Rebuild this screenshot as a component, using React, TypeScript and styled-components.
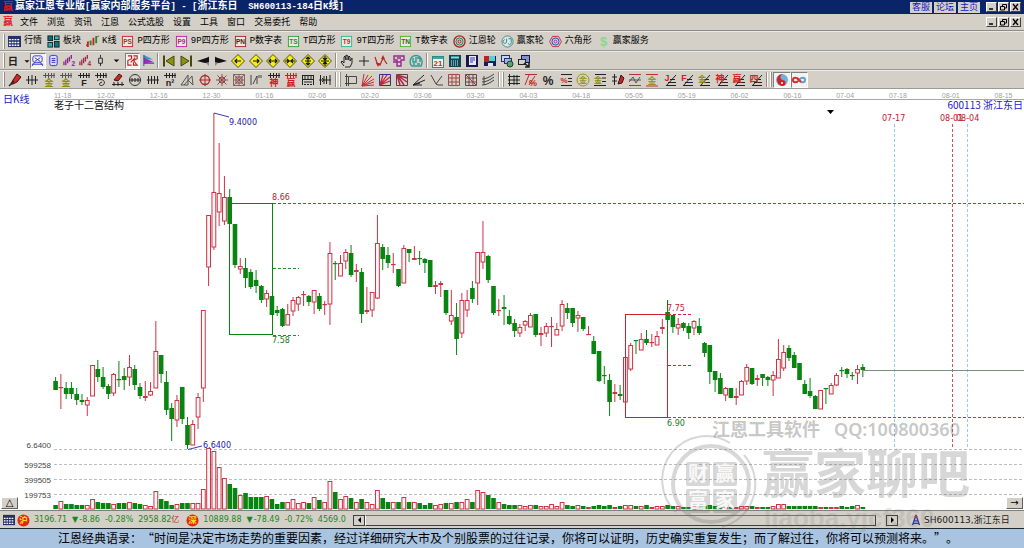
import React from 'react';
import styled, { createGlobalStyle } from 'styled-components';

const CJK = '"Noto Sans CJK SC", sans-serif';
const FACE = '#d4d0c8';

const Global = createGlobalStyle`
  * { box-sizing: border-box; }
  body { margin: 0; background: ${FACE}; font-family: "Liberation Sans", ${CJK}; font-size: 9px; color: #000; }
  button { font: inherit; color: inherit; padding: 0; margin: 0; border: 0; background: none; }
  svg { display: block; }
`;

/* ---------- layout ---------- */

const Window = styled.div`
  position: relative;
  width: 100%;
  overflow: hidden;
`;

const TitleBar = styled.header`
  display: flex;
  align-items: center;
  gap: 2px;
  height: 14px;
  padding: 0 3px;
  background: #0a246a;
  color: #fff;
`;

const Title = styled.h1`
  flex: 1;
  margin: 0;
  font: bold 10px/12px "Liberation Mono", ${CJK};
  white-space: pre;
`;

const Latin = styled.span`
  font-size: 9px;
`;

const Logo = styled.span`
  width: 10px;
  font: bold 10px/12px "Liberation Sans", ${CJK};
  color: #e01818;
`;

const MenuBar = styled.nav`
  display: flex;
  align-items: center;
  height: 17px;
  padding: 0 3px;
  border-bottom: 1px solid #8c8a84;
`;

const MenuItems = styled.div`
  flex: 1;
  display: flex;
  gap: 9px;
  padding-left: 7px;
`;

const MenuButton = styled.button`
  font: 9px/14px ${CJK};
`;

const WindowButtons = styled.div`
  display: flex;
  gap: 1px;
  margin-left: 4px;
`;

const WindowButton = styled.button`
  width: 11px;
  height: 10px;
  background: ${FACE};
  border: 1px solid;
  border-color: #fff #404040 #404040 #fff;
`;

const TitleLink = styled.a`
  height: 11px;
  padding: 0 2px;
  font: 9px/11px "Liberation Sans", ${CJK};
  color: #1414c8;
  background: ${FACE};
  text-decoration: none;
`;

const Toolbar = styled.div<{ $height: number }>`
  display: flex;
  align-items: center;
  height: ${p => p.$height}px;
  padding-left: 2px;
  border-top: 1px solid #eceae4;
  border-bottom: 1px solid #9c9a94;
`;

const Grip = styled.i`
  width: 2px;
  height: 15px;
  margin: 0 1px;
  border-left: 1px solid #fff;
  border-right: 1px solid #908e88;
`;

const Divider = styled(Grip)`
  border-left-color: #908e88;
  border-right-color: #fff;
`;

const LabelTools = styled.div`
  display: flex;
  gap: 5px;
  padding-left: 2px;
`;

const LabelTool = styled.button`
  display: flex;
  align-items: center;
  gap: 3px;
  font: 9px/14px "Liberation Mono", ${CJK};
  white-space: nowrap;
`;

const Group = styled.div<{ $width: number }>`
  display: grid;
  grid-auto-flow: column;
  grid-auto-columns: 1fr;
  width: ${p => p.$width}px;
`;

const Tool = styled.button<{ $pressed?: boolean }>`
  display: flex;
  align-items: center;
  justify-content: center;
  height: 16px;
  border: 1px solid transparent;
  ${p => p.$pressed && 'background: #f4f3f0; border-color: #808080 #fff #fff #808080;'}
`;

const ChartArea = styled.main`
  position: relative;
  background: #fff;
`;

const ChartButton = styled.button<{ $side: 'left' | 'right' }>`
  position: absolute;
  bottom: 1px;
  ${p => p.$side}: 1px;
  width: 17px;
  height: 12px;
  font: 10px/10px "DejaVu Sans", sans-serif;
  background: ${FACE};
  border: 1px solid;
  border-color: #fff #606060 #606060 #fff;
`;

const StatusBar = styled.footer`
  display: flex;
  align-items: center;
  height: 18px;
  padding: 1px 0 0 3px;
  border-top: 1px solid #808080;
`;

const Quotes = styled.div`
  flex: none;
  display: flex;
  align-items: center;
  gap: 2px;
  width: 350px;
  overflow: hidden;
  font: 8px/14px "DejaVu Sans", ${CJK};
  color: #158a1c;
  white-space: nowrap;
`;

const Quote = styled.span`
  display: flex;
  align-items: center;
  gap: 5px;
  padding: 0 5px 0 2px;
`;

const Change = styled.span`
  display: flex;
  align-items: center;
  gap: 1px;
`;

const Red = styled.span`
  color: #b03028;
`;

const Scroller = styled.div`
  flex: 1;
  display: flex;
  align-items: center;
  height: 12px;
  background: ${FACE};
`;

const ScrollButton = styled.button`
  display: flex;
  align-items: center;
  justify-content: center;
  width: 12px;
  height: 11px;
  background: ${FACE};
  border: 1px solid #404040;
`;

const Thumb = styled.div`
  flex: 1;
  height: 11px;
  margin-right: 10px;
  border: 1px solid;
  border-color: #77746e #404040 #404040 #fff;
`;

const Symbol = styled.div`
  flex: none;
  display: flex;
  align-items: center;
  gap: 2px;
  width: 114px;
  margin-left: 12px;
  font: 9px/14px "DejaVu Sans", ${CJK};
  color: #222;
  white-space: nowrap;
`;

const Saying = styled.p`
  height: 20px;
  margin: 0;
  padding-left: 58px;
  border-top: 1px solid #202830;
  background: #a9c4e1;
  font: 12px/18px ${CJK};
  text-spacing-trim: space-all;
  white-space: nowrap;
  overflow: hidden;
`;

const Watermark = styled.svg`
  position: absolute;
  right: 34px;
  bottom: 0;
  pointer-events: none;
`;

/* ---------- icons ---------- */

type PathProps = { d: string; c?: string; f?: string; w?: number };
const P = ({ d, c = '#222', f = 'none', w = 1 }: PathProps) => (
  <path d={d} stroke={c} fill={f} strokeWidth={w} />
);

type GlyphProps = { x?: number; y?: number; s?: number; c?: string; children: React.ReactNode };
const G = ({ x = 7, y = 11, s = 9, c = '#222', children }: GlyphProps) => (
  <text x={x} y={y} fontSize={s} fill={c} textAnchor="middle" fontWeight="bold" fontFamily={'"Liberation Sans", ' + CJK}>
    {children}
  </text>
);

const Icon = ({ children, size = 14 }: { children: React.ReactNode; size?: number }) => (
  <svg width={size} height={size} viewBox="0 0 14 14" aria-hidden="true">{children}</svg>
);

const Boxed = ({ c, t, label }: { c: string; t: string; label: string }) => (
  <>
    <rect x="1.5" y="1.5" width="11" height="11" fill="#f0e8e0" stroke={c} />
    <G y={10} s={7} c={t}>{label}</G>
  </>
);

const Diamond = ({ d }: { d: string }) => (
  <>
    <P d="M7 .5L13.5 7L7 13.5L.5 7Z" c="#55500a" f="#f2ee20" />
    <P d={d} c="#111" w={1.2} />
  </>
);

const Ruler = ({ c = '#222' }: { c?: string }) => <P d="M1 2.5H13M3.5 0V5M6.5 0V5M9.5 0V5M12 0V5" c={c} />;
const Fan = () => <P d="M4 12.5H13M5 9.5H13M7 6.5H12M3 13L13 2" />;

const grid = 'M1.5 1.5H12.5V12.5H1.5ZM1.5 5H12.5M1.5 9H12.5M5 1.5V12.5M9 1.5V12.5';

const labelTools: [string, React.ReactNode][] = [
  ['行情', <><rect x="0" y="1" width="14" height="12" fill="#24306c" /><path d="M1 5H13M1 8H13M1 11H13" stroke="#fff" strokeWidth="1.5" strokeDasharray="2 1" /></>],
  ['板块', <><rect x="1" y="1" width="5" height="5" fill="#0c7070" stroke="#123" /><rect x="8" y="1" width="5" height="4" fill="#30c0b0" stroke="#123" /><rect x="1" y="8" width="5" height="5" fill="#30b0a8" stroke="#123" /><rect x="8" y="7" width="5" height="6" fill="#107878" stroke="#123" /></>],
  ['K线', <><P d="M2 7V13M8 3V11" c="#d02020" w={2} /><P d="M5 6V11M11 1V9" c="#189030" w={2} /><P d="M0 12L3 7M12 2L14 1" c="#d02020" /></>],
  ['P四方形', <Boxed c="#c82828" t="#a03030" label="PS" />],
  ['9P四方形', <Boxed c="#c020b8" t="#b81890" label="P9" />],
  ['P数字表', <Boxed c="#a02828" t="#501818" label="PN" />],
  ['T四方形', <Boxed c="#28a838" t="#189048" label="TS" />],
  ['9T四方形', <Boxed c="#28b8a0" t="#b03030" label="T9" />],
  ['T数字表', <Boxed c="#48b828" t="#207020" label="TN" />],
  ['江恩轮', <><circle cx="7" cy="7" r="6" fill="none" stroke="#a02020" strokeWidth="1.4" /><circle cx="7" cy="7" r="3.8" fill="none" stroke="#207040" /><circle cx="7" cy="7" r="1.6" fill="none" stroke="#702020" /></>],
  ['赢家轮', <><circle cx="7" cy="7" r="6" fill="#dce8dc" stroke="#389078" /><P d="M4 5A2 2 0 1 0 6 8V4M8 4H11V8C11 11 8 11 8 9" c="#3878a8" /></>],
  ['六角形', <><P d="M3.8 1.5H10.2L13.4 7L10.2 12.5H3.8L.6 7Z" c="#c02838" /><circle cx="7" cy="7" r="3.8" fill="#c8d0f4" stroke="#2838c0" /><circle cx="7" cy="7" r="1.5" fill="none" stroke="#b02878" /></>],
  ['赢家服务', <G y={12} s={14} c="#88d888">$</G>],
];

const caret = <P d="M4 6H10L7 9Z" c="none" f="#111" />;

const periodIcons: [React.ReactNode, boolean?][] = [
  [<><rect x="2" y="2" width="10" height="7" rx="2" fill="none" stroke="#3030c8" /><P d="M4 4L10 8M10 4L4 8M1 13L4 9M13 13L10 9M1 11H13" c="#3030c8" /></>, true],
  [<><rect x="3" y="1.5" width="8" height="11" rx="2" fill="#dcdcf8" stroke="#3030c8" /><P d="M5 5H9M5 7H9M5 9H9" c="#3030c8" /></>],
  [<><P d="M1 12V8M3 12V6M5 10V4M7 8V3M9 5V1" c="#902090" w={1.4} /><G x={11} y={13} s={7} c="#7828a0">2</G></>],
  [<><P d="M1 12V8M3 12V6M5 10V4M7 8V3M9 5V1" c="#a02848" w={1.4} /><G x={11} y={13} s={7} c="#a02848">4</G></>],
  [<P d="M5 4.5H9V10H5ZM7 1V4M7 10V13" />],
  [caret],
  [<P d="M2 2H6V5L2 7V12H6M8 2H12V5L8 7L12 12H8V9M5 9L10 4" c="#c02020" w={1.2} />, true],
  [<><P d="M2 1L12 6H2Z" c="none" f="#28a0b8" /><P d="M2 4L13 9L2 10Z" c="none" f="#a828b0" /><P d="M2 1V13M2 10H13" c="#3838c8" /></>],
];

const navIcons: React.ReactNode[] = [
  <><P d="M2 1.5V12.5" w={2} c="#44480c" /><P d="M12 2V12L4 7Z" c="#44480c" f="#8a9210" /></>,
  <><P d="M12 1.5V12.5" w={2} c="#44480c" /><P d="M2 2V12L10 7Z" c="#44480c" f="#8a9210" /></>,
  <><P d="M13 2V12L8 7Z" c="none" f="#888" /><P d="M13 3V8L9 9L1 7Z" c="none" f="#111" /></>,
  <><P d="M1 2V12L6 7Z" c="none" f="#888" /><P d="M1 3V8L5 9L13 7Z" c="none" f="#111" /></>,
  <Diamond d="M4 7H10M6 5L4 7L6 9" />,
  <Diamond d="M4 7H10M8 5L10 7L8 9" />,
  <Diamond d="M3 7H11M5 5L3 7L5 9M9 5L11 7L9 9" />,
  <Diamond d="M2 7H12M4 5L6 7L4 9M10 5L8 7L10 9" />,
  <Diamond d="M7 3V11M5 5L7 3L9 5M5 9L7 11L9 9M4 7H10" />,
  <Diamond d="M7 2V12M5 4L7 6L9 4M5 10L7 8L9 10M3 7H11" />,
];

const editIcons: React.ReactNode[] = [
  <P d="M4 12L1 8L2 7L4 9V3L5 2L6 6V1L8 2V6L9 2L10 3V7L12 4V9L10 13H5" />,
  <P d="M7 2V12M2 7H12" />,
  <><P d="M1 3L3 9L6 11L9 4L13 10" c="#b02828" w={1.2} /><P d="M4 13L2 9H6ZM9 1L7 5H11Z" c="none" f="#c82020" /></>,
  <P d="M2 2H12V6H9V12H5V6H2ZM5 4H9M5 8H9M1 8H5" c="#982890" w={1.4} />,
  <P d="M3 12C0 10 1 5 3 3C5 1 9 1 11 3C14 6 13 10 12 12ZM4 4V8H7V3M8 4H11V8M4 10H6M8 10H11" c="#2f9c94" w={1.4} />,
];

const systemIcons: React.ReactNode[] = [
  <><rect x="1.5" y="2.5" width="11" height="11" fill="#f4f4f4" stroke="#2a8c84" /><P d="M2 4H12" c="#40a8a0" w={2} /><G y={12} s={8} c="#c03020">21</G></>,
  <><rect x="1" y="1" width="12" height="12" fill="#0c4858" /><P d="M3 3.5H11" c="#80e0d8" w={2} /><path d="M3 7H11M3 9H11M3 11H11" stroke="#d8f0f0" strokeDasharray="1 1" /></>,
  <><rect x="1" y="1" width="12" height="12" fill="#181850" /><rect x="4" y="2" width="7" height="9" fill="#e8e8fc" /><P d="M5 4H10M5 6H10M5 8H8" c="#3838a0" /></>,
  <><rect x="1" y="2" width="12" height="10" fill="#14205c" /><rect x="1" y="2" width="5" height="6" fill="#c02020" /><rect x="6" y="2" width="6" height="5" fill="#58d0d0" /><rect x="5" y="9" width="5" height="3" fill="#e8e8e8" /></>,
  <><rect x="1.5" y="1.5" width="8" height="6" fill="#c8d8f0" stroke="#203070" /><rect x="4.5" y="4.5" width="7" height="5" fill="#a8b8e0" stroke="#203070" /><circle cx="10" cy="10" r="3" fill="#60a070" stroke="#184028" /></>,
  <><rect x="4.5" y="1.5" width="8" height="7" fill="#8090d0" stroke="#181838" /><rect x="1.5" y="5.5" width="7" height="5" fill="#d0d0d0" stroke="#222" /><P d="M7 9L12 13M12 9V13H8" w={1.6} /></>,
];

const drawIcons: React.ReactNode[] = [
  <><P d="M3 11L5 7L9 1L13 4L9 9L5 11Z" c="#401010" f="#d02828" /><P d="M1 13L6 8" w={1.5} /></>,
  <P d="M1 7H13M3.5 3V11M7 2V12M10.5 3V11" />,
  <><Ruler c="#555" /><G y={13} s={9} c="#8c8a10">金</G></>,
  <><Ruler c="#555" /><G y={13} s={9} c="#8c8a10">金</G></>,
  <><Ruler /><G y={13} s={9}>F</G></>,
  <><Ruler /><P d="M3 8C6 5 12 7 10 11C8 14 4 12 6 10L8 9" /></>,
  <><P d="M3 7L8 1L11 3L7 8Z" c="#401010" f="#d02828" /><P d="M1 11.5H13M3 9V13M7 9V13M11 9V13" /></>,
  <><circle cx="7" cy="7" r="5.5" fill="none" stroke="#333" /><P d="M1 7H13M4 5V9M7 5V9M10 5V9" /></>,
  <P d="M1 7H13M2.5 3V11M5.5 3V11M8.5 3V11M11.5 3V11" />,
  <><Ruler /><G y={13} s={9}>n²</G></>,
  <P d="M1 12L8 2V12ZM4 12L12 3L13 12M8 7L13 12" c="#555" />,
  <><circle cx="7" cy="7" r="4.5" fill="none" stroke="#b02828" strokeWidth="1.3" /><P d="M7 1V13M1 7H13" c="#b02828" /></>,
  <><P d="M7 1V13M1 7H13M2.5 2.5L11.5 11.5M11.5 2.5L2.5 11.5" c="#904848" /><circle cx="7" cy="7" r="3" fill="none" stroke="#904848" /></>,
  <><P d="M1.5 1.5H12.5V12.5H1.5ZM1.5 7H12.5M7 1.5V12.5M1.5 1.5L12.5 12.5M12.5 1.5L1.5 12.5" c="#804848" w={0.8} /><rect x="4" y="4" width="6" height="6" fill="none" stroke="#804848" /></>,
  <P d="M2 2V12M4 11L8 3V11M10 2V5M12 2V5" c="#444" />,
  <><Ruler /><G y={13} s={9} c="#d01818">神</G></>,
  <><Ruler c="#b02828" /><G y={13} s={9} c="#d01818">赢</G></>,
  <P d="M1.5 2V12M12.5 2V12M1 2.5H13M1 6.5H13M4 2V6M7 2V6M10 2V6M3 9H11M3 11.5H5M6 11.5H8M9 11.5H11" />,
  <P d="M1 7H13M2.5 2V12M6 3V11M8.5 3V11M12 2V12M4 5L6 7L4 9" />,
];

const fanIcons: React.ReactNode[] = [
  <P d="M4.5 3.5H12.5V10.5H4.5ZM1 3.5H4M4.5 10V13M2.5 1V13M1 10.5H4" c="#444" />,
  <P d="M1 13L3 1M1 13L7 2M1 13L11 3M1 13L13 6M1 13L13 9M1 13L13 12" c="#c03030" />,
  <><P d="M1.5 1.5H12.5V12.5H1.5Z" c="#303090" /><P d="M2 12L5 2M2 12L9 2M2 12L12 4M2 12L12 8" c="#c02838" w={1.3} /></>,
  <><P d="M1.5 1.5H12.5V12.5H1.5Z" c="#604040" /><P d="M2 2L12 5M2 2L12 9M2 2L9 12M2 2L5 12" c="#b02848" w={1.5} /></>,
  <P d="M1 12L12 2M1 12L13 7M1 12H10M1 12L8 10" />,
  <P d="M1 2L6 11L12 3M6 11L8 12L13 12" c="#444" />,
  <P d={grid} c="#a04848" />,
  <><P d={grid} c="#604848" /><P d="M2 2L12 12" c="#c03030" /></>,
  <P d="M1 6C5 6 9 4 13 1M1 9C5 9 9 7 13 4M1 12C5 12 9 10 13 7M3 3V12" c="#444" />,
];

const levelIcons: React.ReactNode[] = [
  <P d="M2.5 1V13M1 3.5H13M1 7H13M1 10.5H13M7 2V12M10 2V12" />,
  <><P d="M1 1.5H13M1 12L5 2M5 12L11 3" c="#c02828" /><G x={9} y={13} s={9} c="#d02020">%</G></>,
  <G y={12} s={12}>%</G>,
  <><P d="M2 1.5H13M9 5.5H13M9 8.5H13M2 12.5H13" /><G x={5} y={10} s={8} c="#d02020">%</G></>,
  <><circle cx="7" cy="7" r="6" fill="none" stroke="#98961c" /><G y={10} s={8} c="#98961c">金</G></>,
  <><P d="M2 1.5H13M9 5H13M9 8.5H13M1 12.5H13" /><G x={5} y={10} s={8} c="#8c8a10">金</G></>,
  <><P d="M3.5 1V12M1 4H6M1 8H6" /><P d="M7 11L10 2L13 5L11 10Z" c="#401010" f="#c82828" /></>,
  <><P d="M1 1.5H13M1 12.5H13" c="#c03030" /><P d="M1 9L5 4L8 10L12 4M1 7H13" c="#555" /></>,
  <><P d="M1 1.5H13M1 13H13" c="#c03030" /><G y={11} s={9} c="#98961c">金</G></>,
  <><Fan /><G x={4} y={8} s={9} c="#d02020">J</G></>,
  <><Fan /><G x={4} y={8} s={9} c="#d02020">F</G></>,
  <><Fan /><G x={5} y={9} s={8} c="#8c8a10">金</G></>,
  <><Fan /><G x={5} y={9} s={9} c="#d02020">神</G></>,
  <><Fan /><G x={5} y={9} s={9} c="#d02020">赢</G></>,
  <><Fan /><G x={5} y={9} s={9} c="#d02020">四</G></>,
];

const yinYang = (
  <>
    <circle cx="7" cy="7" r="6" fill="#70b0e0" />
    <path d="M9 1A6 6 0 1 0 7 13A3 3 0 0 0 8 7A3 3 0 0 1 9 1Z" fill="#d82020" />
    <circle cx="7" cy="10" r="1" fill="#fff" />
  </>
);
const infinity = (
  <>
    <P d="M7 7C5 4 1 4 1 7S5 10 7 7" c="#d83030" w={2} />
    <P d="M7 7C9 4 13 4 13 7S9 10 7 7" c="#60a0d0" w={2} />
    <P d="M5 5L9 9" c="#d83030" w={2} />
  </>
);

/* ---------- chart data: colour, high, body top, body bottom, low, volume ---------- */

const raw = `
g377,381,390,390,4 r374,387,388,409,8 g382,388,394,399,5 g382,388,394,399,5 g388,394,400,405,4 g394,400,402,405,4
r397,400,405,416,4 r365,365,396,396,10 g360,369,377,382,7 g367,377,387,389,6 g384,386,394,399,6 r373,374,393,396,5
g361,379,380,387,6 g368,376,380,390,6 r355,367,377,386,7 g365,369,385,390,6 g383,387,396,399,5 r381,396,398,401,4
r382,391,395,396,3 r321,351,388,388,18 g355,355,374,383,10 g371,382,410,415,8 g403,408,419,441,4 r395,400,420,427,5
g387,387,419,424,6 g417,425,445,449,6 r420,424,445,445,6 r393,397,417,429,6 r310,310,388,402,20 r215,215,267,286,61
r113,192,247,250,58 r143,193,212,226,42 r176,197,221,225,31 g189,197,224,224,25 g224,224,265,268,21 r258,266,269,274,14
g258,268,278,288,16 g269,272,287,289,12 g270,280,286,293,12 g285,286,300,303,12 r290,293,299,307,13 g296,296,315,315,10
g306,310,313,316,5 g308,309,326,327,7 r304,314,325,325,7 r297,300,311,316,10 r296,297,304,311,6 r291,294,295,306,7
g295,296,302,306,6 r290,290,302,314,12 g293,296,309,311,9 r301,304,305,315,7 r242,253,304,325,28 g261,263,264,280,17
r255,263,276,276,10 r249,252,261,269,13 g245,253,275,277,11 r264,270,272,282,7 g268,272,314,323,10 r287,310,312,314,7
r292,292,310,317,5 r215,243,298,299,19 g244,247,259,270,11 g247,255,263,268,7 r253,264,265,273,7 g269,269,286,287,7
r245,248,283,283,12 g249,249,253,262,7 r246,258,260,260,7 g251,258,259,265,6 g258,259,263,273,4 g260,260,287,287,6
r281,285,287,294,4 r281,283,285,297,5 g290,290,313,315,6 r290,315,321,325,6 g303,317,339,355,7 r293,300,333,338,7
r290,300,310,317,10 g281,288,299,303,7 r252,252,283,305,19 r221,252,262,269,17 g255,256,280,283,14 g286,286,313,315,11
r299,310,311,316,7 g295,307,309,325,5 g310,316,324,325,4 g319,323,331,337,4 r324,327,333,337,4 r320,321,325,331,3
r313,315,327,327,4 g314,314,335,337,4 r327,333,335,346,3 r323,326,333,337,3 r317,326,327,347,5 r323,329,335,335,3
r300,304,326,331,7 g303,308,313,319,4 g308,308,323,327,3 r311,315,318,332,4 g317,317,329,331,3 r326,334,335,335,2
g336,341,354,354,3 g351,351,381,382,4 g366,375,376,384,3 g374,380,402,416,4 r384,392,394,402,2 g385,394,396,400,3
r357,357,402,402,4 r343,345,369,371,4 g340,340,341,354,3 r333,339,350,350,3 g330,339,343,345,4 r334,342,343,347,2
r331,336,345,345,3 r319,327,329,334,3 g300,312,320,322,4 g315,315,327,333,3 r318,324,328,335,3 g322,323,328,331,2
g323,326,333,339,2 r320,321,328,335,3 g318,326,333,335,3 g342,343,353,357,3 g345,345,372,384,4 g371,371,380,392,3
g373,378,394,394,2 r387,388,395,401,2 g388,388,398,398,2 r388,396,398,405,2 r380,381,395,395,3 r364,367,381,385,3
g368,368,384,385,3 r375,378,380,386,2 g374,374,378,386,2 g376,377,380,386,2 r371,375,380,396,3 r339,359,378,378,5
r345,352,368,371,5 g345,348,358,361,3 g352,355,368,368,3 g363,363,380,380,3 g380,384,394,394,3 g378,391,396,398,3
g395,396,409,409,3 r390,390,409,409,2 g388,388,389,404,2 r383,385,394,394,2 r373,375,385,386,2 g367,370,371,377,3
g368,369,374,378,2 g372,375,376,380,3 r365,369,373,384,4 g364,367,370,377,2`;

const RED = '#cc3344';
const GREEN = '#088410';
const STEP = 5.276;

const candles = raw.trim().split(/\s+/).map((item, i) => {
  const [high, top, bottom, low, volume] = item.slice(1).split(',').map(Number);
  return { x: 55.5 + STEP * i, up: item[0] === 'r', high, top, bottom, low, volume };
});

const Bar = ({ x, top, bottom, up }: { x: number; top: number; bottom: number; up: boolean }) => {
  const h = bottom - top;
  if (up && h > 2) {
    return <rect x={x - 1.8} y={top + 0.5} width={3.8} height={h - 0.5} fill="#fff8f8" stroke={RED} />;
  }
  return <rect x={x - 2.2} y={top} width={4.6} height={Math.max(h, 1.2)} fill={up ? RED : GREEN} />;
};

const axisDates = ['12-02', '12-16', '12-30', '01-16', '02-06', '02-20', '03-06', '03-20', '04-03', '04-18', '05-05', '05-19', '06-02', '06-16', '07-04', '07-18', '08-01', '08-15'];

const volumeScale: [number, string][] = [[449, '6.6400'], [464, '599258'], [479, '399505'], [494, '199753']];

const Label = styled.text`
  font-family: "DejaVu Sans", ${CJK};
  font-size: 8px;
`;
const HanLabel = styled.text`
  font-family: ${CJK};
  font-size: 10px;
`;
const AxisLabel = styled.text`
  font-family: "Liberation Sans", sans-serif;
  font-size: 7px;
  fill: #a0a0a0;
`;
const ScaleLabel = styled.text`
  font-family: "Liberation Sans", sans-serif;
  font-size: 8px;
  fill: #444;
`;

const Dash = ({ x1, y1, x2, y2, c }: { x1: number; y1: number; x2: number; y2: number; c: string }) => (
  <line x1={x1} y1={y1} x2={x2} y2={y2} stroke={c} strokeDasharray="3 2" />
);

const Chart = () => (
  <svg width="100%" viewBox="0 89 1024 421" role="img" aria-label="SH600113 日K线">
    <line x1="54" y1="99.5" x2="1024" y2="99.5" stroke="#a8a8a8" />
    <AxisLabel x="54" y="98">11-18</AxisLabel>
    {axisDates.map((d, i) => <AxisLabel key={d} x={97 + 52.8 * i} y="98">{d}</AxisLabel>)}
    <HanLabel x="3" y="103" fill="#2020c0">日K线</HanLabel>
    <HanLabel x="54" y="109" fill="#111">老子十二宫结构</HanLabel>
    <HanLabel x="1023" y="109" fill="#2020c0" textAnchor="end">600113 浙江东日</HanLabel>
    <path d="M827 110H834L830.5 114Z" fill="#000" />

    {volumeScale.map(([y, text]) => (
      <g key={text}>
        <Dash x1={54} y1={y + 0.5} x2={1024} y2={y + 0.5} c="#bcbcbc" />
        <ScaleLabel x="51" y={y === 449 ? 448 : y + 4} textAnchor="end">{text}</ScaleLabel>
      </g>
    ))}

    <Dash x1={894.5} y1={124} x2={894.5} y2={447} c="#90cdf0" />
    <Dash x1={952.5} y1={124} x2={952.5} y2={447} c="#cc5060" />
    <Dash x1={967.5} y1={124} x2={967.5} y2={447} c="#90cdf0" />
    <Label x="882" y="121" fill="#c02030">07-17</Label>
    <Label x="940" y="121" fill="#c02030">08-01</Label>
    <Label x="956" y="121" fill="#c02030">08-04</Label>

    {candles.map(c => (
      <g key={c.x}>
        <line x1={c.x + 0.1} y1={c.high} x2={c.x + 0.1} y2={c.low} stroke={c.up ? RED : GREEN} />
        <Bar x={c.x} top={c.top} bottom={c.bottom} up={c.up} />
        <Bar x={c.x} top={509 - c.volume} bottom={509} up={c.up} />
      </g>
    ))}

    <rect x="229.5" y="203.5" width="43" height="131" fill="none" stroke={GREEN} />
    <rect x="625.5" y="314.5" width="42" height="103" fill="none" stroke="#d02030" />
    <line x1="667.5" y1="300" x2="667.5" y2="350" stroke={GREEN} />
    <Dash x1={273} y1={203.5} x2={1024} y2={203.5} c="#d02838" />
    <Dash x1={273} y1={268.5} x2={299} y2={268.5} c="#248a2c" />
    <Dash x1={273} y1={335.5} x2={299} y2={335.5} c="#248a2c" />
    <Dash x1={668} y1={314.5} x2={693} y2={314.5} c="#d02838" />
    <Dash x1={668} y1={365.5} x2={693} y2={365.5} c="#d02838" />
    <Dash x1={668} y1={417.5} x2={1024} y2={417.5} c="#248a2c" />
    <line x1="863" y1="370.5" x2="1024" y2="370.5" stroke="#7c8c7c" />

    <path d="M214 113L229 117M188 449.5L202 446" stroke="#3838c0" fill="none" />
    <Label x="229" y="125" fill="#2020b0">9.4000</Label>
    <Label x="203" y="448" fill="#2020b0">6.6400</Label>
    <Label x="272" y="200" fill="#c02030">8.66</Label>
    <Label x="272" y="343" fill="#18782a">7.58</Label>
    <Label x="667" y="311" fill="#c02030">7.75</Label>
    <Label x="667" y="426" fill="#18782a">6.90</Label>
  </svg>
);

const ControlButtons = () => (
  <WindowButtons>
    <WindowButton aria-label="最小化"><svg width="9" height="8"><path d="M2 6H6" stroke="#000" strokeWidth="1.5" /></svg></WindowButton>
    <WindowButton aria-label="还原"><svg width="9" height="8"><path d="M3.5 3V1.5H7.5V5H6M1.5 3.5H5.5V7H1.5Z" stroke="#000" fill="none" /></svg></WindowButton>
    <WindowButton aria-label="关闭"><svg width="9" height="8"><path d="M2 1L7 7M7 1L2 7" stroke="#000" strokeWidth="1.3" /></svg></WindowButton>
  </WindowButtons>
);

const Badge = ({ text }: { text: string }) => (
  <svg width="13" height="13" viewBox="0 0 14 14">
    <circle cx="7" cy="7" r="6.5" fill="#e02818" />
    <G y={10} s={9} c="#ffe020">{text}</G>
  </svg>
);

const tools = (items: React.ReactNode[]) =>
  items.map((icon, i) => <Tool key={i}><Icon>{icon}</Icon></Tool>);

const menus = ['文件', '浏览', '资讯', '江恩', '公式选股', '设置', '工具', '窗口', '交易委托', '帮助'];

export default function App() {
  return (
    <Window lang="zh-CN">
      <Global />
      <TitleBar>
        <Logo>赢</Logo>
        <Title>
          赢家江恩专业版<Latin>[</Latin>赢家内部服务平台<Latin>] - [</Latin>浙江东日<Latin>{'  SH600113-184'}</Latin>日<Latin>K</Latin>线<Latin>]</Latin>
        </Title>
        <TitleLink href="#service">客服</TitleLink>
        <TitleLink href="#forum">论坛</TitleLink>
        <TitleLink href="#home">主页</TitleLink>
        <ControlButtons />
      </TitleBar>

      <MenuBar>
        <Logo>赢</Logo>
        <MenuItems>{menus.map(m => <MenuButton key={m}>{m}</MenuButton>)}</MenuItems>
        <ControlButtons />
      </MenuBar>

      <Toolbar $height={20}>
        <Grip />
        <LabelTools>
          {labelTools.map(([text, icon]) => (
            <LabelTool key={text}><Icon size={13}>{icon}</Icon>{text}</LabelTool>
          ))}
        </LabelTools>
      </Toolbar>

      <Toolbar $height={19}>
        <Grip />
        <Group $width={24}>
          <Tool><Icon size={12}><G s={12} y={12}>日</G></Icon></Tool>
          <Tool><Icon size={12}>{caret}</Icon></Tool>
        </Group>
        <Group $width={126}>
          {periodIcons.map(([icon, on], i) => <Tool key={i} $pressed={on}><Icon size={13}>{icon}</Icon></Tool>)}
        </Group>
        <Divider />
        <Group $width={174}>{tools(navIcons)}</Group>
        <Divider />
        <Group $width={87}>{tools(editIcons)}</Group>
        <Divider />
        <Group $width={104}>{tools(systemIcons)}</Group>
      </Toolbar>

      <Toolbar $height={19}>
        <Grip />
        <Group $width={328}>{tools(drawIcons)}</Group>
        <Divider />
        <Grip />
        <Group $width={155}>{tools(fanIcons)}</Group>
        <Divider />
        <Grip />
        <Group $width={260}>{tools(levelIcons)}</Group>
        <Divider />
        <Grip />
        <Group $width={35}>
          <Tool $pressed><Icon>{yinYang}</Icon></Tool>
          <Tool $pressed><Icon>{infinity}</Icon></Tool>
        </Group>
      </Toolbar>

      <ChartArea>
        <Chart />
        <ChartButton $side="left">△</ChartButton>
        <ChartButton $side="right">→</ChartButton>
      </ChartArea>

      <StatusBar>
        <Quotes>
          <Icon size={12}>{labelTools[0][1]}</Icon>
          <Badge text="沪" />
          <Quote>
            <span>3196.71</span>
            <Change><span>▼</span><span>-8.86</span></Change>
            <span>-0.28%</span>
            <span>2958.82<Red>亿</Red></span>
          </Quote>
          <Badge text="深" />
          <Quote>
            <span>10889.88</span>
            <Change><span>▼</span><span>-78.49</span></Change>
            <span>-0.72%</span>
            <span>4569.0</span>
          </Quote>
        </Quotes>
        <Scroller>
          <ScrollButton aria-label="向左"><svg width="5" height="6"><path d="M4 0V6L1 3Z" /></svg></ScrollButton>
          <Thumb />
          <ScrollButton aria-label="向右"><svg width="5" height="6"><path d="M1 0V6L4 3Z" /></svg></ScrollButton>
        </Scroller>
        <Symbol>
          <Icon size={12}><P d="M7 1L3 13M7 1L11 13M5 8H9M4 11H10" c="#2838a0" w={1.6} /><circle cx="7" cy="3" r="1.6" fill="#c03030" /></Icon>
          SH600113,浙江东日
        </Symbol>
      </StatusBar>

      <Saying>江恩经典语录：“时间是决定市场走势的重要因素，经过详细研究大市及个别股票的过往记录，你将可以证明，历史确实重复发生；而了解过往，你将可以预测将来。”。</Saying>

      <Watermark width="330" height="132" viewBox="660 416 330 132" fill="#707070" stroke="none" fontFamily={CJK} aria-hidden="true">
        <g opacity="0.38" fontSize="18" fontWeight="bold">
          <text x="712" y="436">江恩工具软件</text>
          <text x="834" y="436" fontFamily='"Noto Sans", sans-serif' fontWeight="600">QQ:100800360</text>
        </g>
        <g opacity="0.27">
          <circle cx="711" cy="484" r="38" fill="none" stroke="#707070" strokeWidth="4" />
          <path d="M676 512A44 44 0 0 1 730 443M744 455A44 44 0 0 1 722 527" fill="none" stroke="#707070" strokeWidth="2" />
          <rect x="686" y="462" width="24" height="24" rx="2" />
          <rect x="713" y="462" width="24" height="24" rx="2" />
          <rect x="686" y="489" width="24" height="24" rx="2" />
          <rect x="713" y="489" width="24" height="24" rx="2" />
          <text x="762" y="493" fontSize="52" fontWeight="bold">赢家聊吧</text>
          <text x="764" y="527" fontSize="26" fontWeight="bold" fontFamily='"Liberation Sans", sans-serif' opacity="0.6">liaoba.yjcf360</text>
        </g>
        <g fill="#fff" opacity="0.85" fontSize="20" fontWeight="bold" textAnchor="middle">
          <text x="698" y="481">财</text>
          <text x="725" y="481">赢</text>
          <text x="698" y="508">富</text>
          <text x="725" y="508">家</text>
        </g>
      </Watermark>
    </Window>
  );
}
